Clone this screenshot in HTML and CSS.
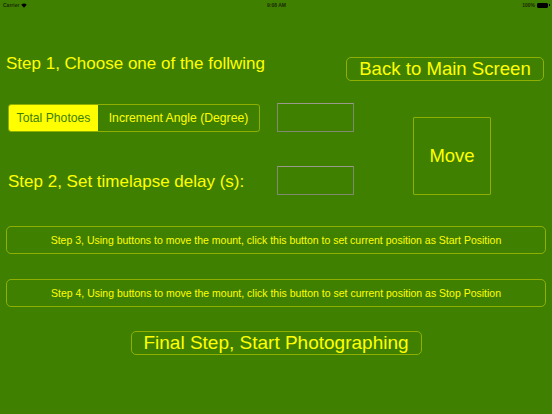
FILE: index.html
```html
<!DOCTYPE html>
<html>
<head>
<meta charset="utf-8">
<link rel="stylesheet" href="styles.css">
</head>
<body>
<div class="status">
  <div class="st-left">Carrier
    <svg class="wifi" width="6" height="5" viewBox="0 0 12 9"><path d="M6 9 L0.5 3 A8 8 0 0 1 11.5 3 Z" fill="#000"/></svg>
  </div>
  <div class="st-time">9:08 AM</div>
  <div class="st-right">100% <span class="battery"><span class="bat-fill"></span></span><span class="bat-tip"></span></div>
</div>
<div class="main">
  <div class="row1">
    <div class="title">Step 1, Choose one of the follwing</div>
    <div class="btn back">Back to Main Screen</div>
  </div>
  <div class="grid">
    <div class="segmented">
      <div class="seg selected">Total Photoes</div>
      <div class="seg">Increment Angle (Degree)</div>
    </div>
    <div class="field f1"></div>
    <div class="btn move">Move</div>
    <div class="title step2">Step 2, Set timelapse delay (s):</div>
    <div class="field f2"></div>
  </div>
  <div class="btn wide step3">Step 3, Using buttons to move the mount, click this button to set current position as Start Position</div>
  <div class="btn wide step4">Step 4, Using buttons to move the mount, click this button to set current position as Stop Position</div>
  <div class="final-wrap"><div class="btn final">Final Step, Start Photographing</div></div>
</div>
</body>
</html>
```
FILE: styles.css
```css
html, body {
  margin: 0;
  padding: 0;
}
body {
  width: 552px;
  height: 414px;
  background: #408000;
  font-family: "Liberation Sans", Arial, sans-serif;
  color: #ffff00;
  overflow: hidden;
}
.status {
  height: 10px;
  display: flex;
  justify-content: space-between;
  align-items: center;
  padding: 0 2px 0 3px;
  font-size: 5px;
  font-weight: bold;
  color: #1a2a00;
}
.st-left, .st-right {
  width: 60px;
  display: flex;
  align-items: center;
  gap: 2px;
}
.st-right {
  justify-content: flex-end;
  gap: 1px;
}
.battery {
  width: 9px;
  height: 3px;
  border: 0.5px solid #000;
  border-radius: 1px;
  display: inline-block;
  margin-left: 1px;
}
.bat-fill {
  display: block;
  width: 100%;
  height: 100%;
  background: #000;
}
.bat-tip {
  display: inline-block;
  width: 1px;
  height: 2px;
  background: #000;
}
.main {
  display: flex;
  flex-direction: column;
}
.row1 {
  display: flex;
  justify-content: space-between;
  align-items: flex-start;
  margin-top: 45px;
  padding: 0 8px 0 6px;
}
.title {
  font-size: 17px;
  line-height: 17px;
  white-space: nowrap;
}
.btn {
  box-sizing: border-box;
  border: 1px solid #8fb000;
  border-radius: 5px;
  display: flex;
  align-items: center;
  justify-content: center;
  white-space: nowrap;
}
.back {
  margin-top: 2px;
  width: 198px;
  height: 24px;
  font-size: 18.6px;
}
.grid {
  display: grid;
  grid-template-columns: 271px 77px 59px 78px;
  grid-template-rows: 29px 29px;
  row-gap: 34px;
  margin: 22px 0 0 6px;
}
.segmented {
  grid-column: 1;
  grid-row: 1;
  box-sizing: border-box;
  margin: 1px 0 0 2px;
  width: 252px;
  height: 28px;
  border: 1px solid #8fb000;
  border-radius: 3px;
  display: flex;
  overflow: hidden;
  font-size: 12.2px;
}
.seg {
  display: flex;
  align-items: center;
  justify-content: center;
  flex: 1;
}
.seg.selected {
  flex: 0 0 89px;
  background: #ffff00;
  color: #408000;
}
.field {
  box-sizing: border-box;
  border: 1px solid #7f8a70;
  border-top-color: #9a9a8a;
  width: 77px;
  height: 29px;
}
.f1 { grid-column: 2; grid-row: 1; }
.f2 { grid-column: 2; grid-row: 2; }
.move {
  grid-column: 4;
  grid-row: 1 / span 2;
  align-self: end;
  width: 78px;
  height: 78px;
  border-radius: 1px;
  font-size: 18.5px;
}
.step2 {
  grid-column: 1;
  grid-row: 2;
  align-self: start;
  margin: 7px 0 0 2px;
}
.wide {
  margin-left: 6px;
  width: 540px;
  height: 28px;
  font-size: 10.5px;
}
.step3 { margin-top: 31px; }
.step4 { margin-top: 25px; }
.final-wrap {
  display: flex;
  justify-content: center;
  margin-top: 24px;
}
.final {
  width: 291px;
  height: 24px;
  font-size: 19px;
}
```
